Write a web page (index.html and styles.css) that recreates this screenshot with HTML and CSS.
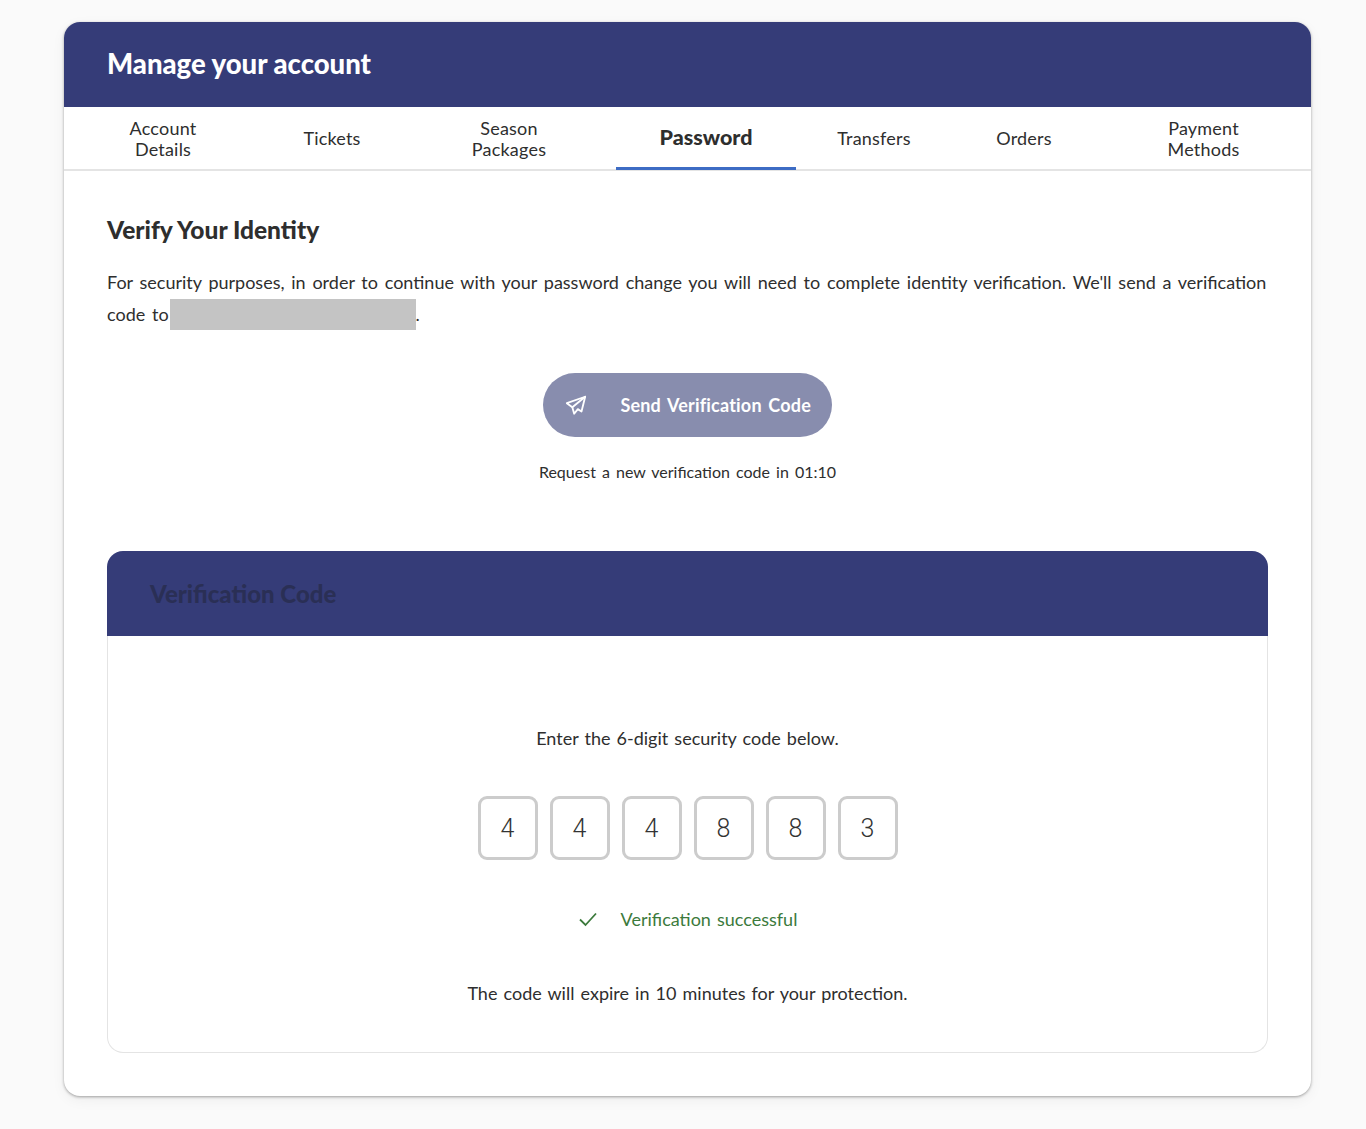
FILE: index.html
```html
<!DOCTYPE html>
<html lang="en">
<head>
<meta charset="utf-8">
<title>Manage your account</title>
<link rel="stylesheet" href="styles.css">
</head>
<body>
<main class="card">
  <header class="card-head"><h1>Manage your account</h1></header>
  <nav class="tabs">
    <a class="tab">Account<br>Details</a>
    <a class="tab">Tickets</a>
    <a class="tab">Season<br>Packages</a>
    <a class="tab active">Password</a>
    <a class="tab">Transfers</a>
    <a class="tab">Orders</a>
    <a class="tab">Payment<br>Methods</a>
  </nav>
  <section class="content">
    <h2>Verify Your Identity</h2>
    <p class="intro">For security purposes, in order to continue with your password change you will need to complete identity verification. We'll send a verification code to<span class="redacted"></span>.</p>
    <div class="send">
      <button class="send-btn" type="button">
        <svg class="send-icon" viewBox="0 0 24 24" width="22" height="22" fill="none" stroke="#fff" stroke-width="2" stroke-linejoin="round" stroke-linecap="round"><path d="M22 3 2 10l6 4.500 2 7 4-5 4 2.500z"/><path d="M22 3 8 14.500"/></svg>
        <span>Send Verification Code</span>
      </button>
      <p class="resend">Request a new verification code in 01:10</p>
    </div>
    <section class="panel">
      <header class="panel-head"><h3>Verification Code</h3></header>
      <div class="panel-body">
        <p class="enter">Enter the 6-digit security code below.</p>
        <div class="digits">
          <div class="digit">4</div>
          <div class="digit">4</div>
          <div class="digit">4</div>
          <div class="digit">8</div>
          <div class="digit">8</div>
          <div class="digit">3</div>
        </div>
        <div class="success">
          <svg viewBox="0 0 20 20" width="20" height="20" fill="none" stroke="#3c7a3c" stroke-width="1.800"><path d="M2 10.500 7.500 16 18 4.500"/></svg>
          <span>Verification successful</span>
        </div>
        <p class="expire">The code will expire in 10 minutes for your protection.</p>
      </div>
    </section>
  </section>
</main>
</body>
</html>
```
FILE: styles.css
```css
* { box-sizing: border-box; }
html, body { margin: 0; padding: 0; }
body {
  background: #fafafa;
  font-family: "Lato", "Liberation Sans", sans-serif;
  color: #2e2e2e;
  padding: 22px 55px 33px 64px;
  font-size: 18px;
  word-spacing: 1.5px;
}
.card {
  width: 1247px;
  height: 1074px;
  background: #fff;
  border-radius: 16px;
  box-shadow: 0 1px 3px rgba(0,0,0,.35), 0 4px 14px rgba(0,0,0,.05);
  overflow: hidden;
}
.card-head {
  height: 85px;
  background: #353c78;
  display: flex;
  align-items: center;
  padding: 0 0 2px 43px;
}
h1 { margin: 0; color: #fff; font-size: 27.5px; font-weight: 900; word-spacing: 0; }
.tabs {
  display: grid;
  grid-template-columns: 198px 140px 214px 180px 156px 144px 215px;
  height: 64px;
  border-bottom: 2px solid #e4e4e4;
}
.tab {
  display: flex;
  align-items: center;
  justify-content: center;
  text-align: center;
  line-height: 21px;
  font-size: 18px;
  letter-spacing: .2px;
  color: #2e2e2e;
}
.tab.active {
  font-weight: 900;
  font-size: 21.500px;
  letter-spacing: 0;
  border-bottom: 3px solid #3d6cc4;
  height: 63px;
}
.content { padding: 44px 43px 0 43px; }
h2 { margin: 0 0 21px; font-size: 24.500px; font-weight: 900; line-height: 30px; word-spacing: 0; }
.intro { margin: 0; line-height: 32px; word-spacing: 2.150px; }
.redacted {
  display: inline-block;
  width: 246px;
  height: 31px;
  background: #c4c4c4;
  vertical-align: top;
  margin-top: 1px;
  margin-left: 1px;
}
.send {
  display: flex;
  flex-direction: column;
  align-items: center;
  margin-top: 43px;
}
.send-btn {
  width: 289px;
  height: 64px;
  border: 0;
  border-radius: 32px;
  background: #888dae;
  color: #fff;
  display: flex;
  align-items: center;
  padding: 0 21px 0 22px;
  justify-content: space-between;
  font: 700 18px "Lato", "Liberation Sans", sans-serif;
  word-spacing: 2px;
  letter-spacing: .2px;
}
.resend { margin: 23px 0 0; font-size: 16px; word-spacing: 2px; line-height: 24px; }
.panel { margin-top: 67px; }
.panel-head {
  height: 85px;
  background: #353c78;
  border-radius: 16px 16px 0 0;
  display: flex;
  align-items: center;
  padding-left: 43px;
}
h3 { margin: 0; font-size: 24px; font-weight: 900; color: #2a2f55; word-spacing: 0; }
.panel-body {
  height: 417px;
  border: 1px solid #e4e4e4;
  border-top: 0;
  border-radius: 0 0 16px 16px;
  display: flex;
  flex-direction: column;
  align-items: center;
  padding-top: 88px;
}
.enter { margin: 0; line-height: 28px; }
.digits { display: flex; gap: 12px; margin-top: 44px; }
.digit {
  width: 60px;
  height: 64px;
  border: 3px solid #cccccc;
  border-radius: 9px;
  display: flex;
  align-items: center;
  justify-content: center;
  font: 300 25px "Roboto", sans-serif;
  color: #333;
}
.success {
  display: flex;
  align-items: center;
  gap: 23px;
  margin-top: 45px;
  color: #3c7a3c;
  line-height: 28px;
}
.expire { margin: 46px 0 0; line-height: 28px; }
```
